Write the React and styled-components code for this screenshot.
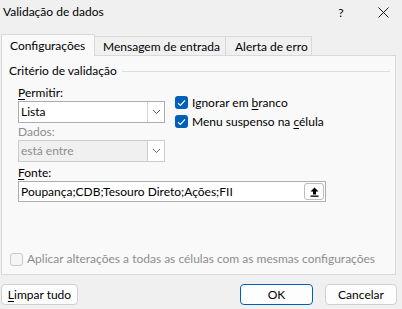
import React from "react";
import styled, {createGlobalStyle} from "styled-components";

const GlobalStyle = createGlobalStyle`
  html, body {
    margin: 0;
    padding: 0;
    background: #f0f0f0;
  }
  body {
    font-family: Lato, "Noto Sans", sans-serif;
    font-size: 12px;
    color: #000;
  }
`

const Window = styled.div`
  width: 402px;
  height: 309px;
  background: #f0f0f0;
  overflow: hidden;
  box-sizing: border-box;
`

const TitleBar = styled.div`
  display: flex;
  align-items: center;
  height: 24px;
`

const Title = styled.div`
  flex: 1;
  padding-left: 3px;
  line-height: 16px;
`

const TitleButton = styled.div`
  width: ${p => p.$w}px;
  height: 24px;
  display: flex;
  align-items: center;
  justify-content: center;
`

const TabStrip = styled.div`
  display: flex;
  align-items: flex-end;
  height: 21px;
  margin-top: 10px;
  padding-left: 1px;
`

const Tab = styled.div`
  position: relative;
  box-sizing: border-box;
  flex: 0 0 auto;
  width: ${p => p.$w}px;
  height: ${p => p.$active ? 22 : 19}px;
  margin-bottom: ${p => p.$active ? -1 : 0}px;
  padding-left: ${p => p.$pl}px;
  display: flex;
  align-items: center;
  white-space: nowrap;
  background: ${p => p.$active ? "#f9f9f9" : "#f0f0f0"};
  border: 1px solid #d9d9d9;
  border-bottom: none;
  ${p => p.$active ? "z-index: 1;" : "margin-left: -1px;"}
`

const Panel = styled.div`
  box-sizing: border-box;
  width: 395px;
  height: 220px;
  margin-left: 1px;
  background: #f9f9f9;
  border: 1px solid #d9d9d9;
  padding: 7px 5px 7px 7px;
  display: flex;
  flex-direction: column;
`

const GroupHeader = styled.div`
  display: flex;
  align-items: center;
  gap: 5px;
  line-height: 16px;
`

const GroupLine = styled.div`
  flex: 1;
  height: 1px;
  background: #dcdcdc;
`

const GroupBody = styled.div`
  padding-left: 9px;
  display: flex;
  flex-direction: column;
`

const Row = styled.div`
  display: flex;
  align-items: flex-start;
  gap: 10px;
`

const FieldColumn = styled.div`
  width: 147px;
  display: flex;
  flex-direction: column;
`

const Label = styled.div`
  line-height: 16px;
  margin-top: ${p => p.$mt || 0}px;
  color: ${p => p.$disabled ? "#8d8d8d" : "#000"};
`

const Key = styled.span`
  text-decoration: underline;
  text-underline-offset: 2px;
`

const Select = styled.div`
  box-sizing: border-box;
  height: 22px;
  display: flex;
  border: 1px solid ${p => p.$disabled ? "#cccccc" : "#adadad"};
  background: ${p => p.$disabled ? "#f0f0f0" : "#fff"};
  color: ${p => p.$disabled ? "#8d8d8d" : "#000"};
`

const SelectValue = styled.div`
  flex: 1;
  padding-left: 2px;
  line-height: 20px;
`

const DropButton = styled.div`
  width: 16px;
  border-left: 1px solid ${p => p.$disabled ? "#cccccc" : "#d4d4d4"};
  background: #fff;
  display: flex;
  align-items: center;
  justify-content: center;
`

const CheckColumn = styled.div`
  margin-top: 16px;
  display: flex;
  flex-direction: column;
`

const CheckRow = styled.div`
  display: flex;
  align-items: ${p => p.$center ? "center" : "flex-start"};
  gap: 4px;
  height: ${p => p.$center ? 16 : 19}px;
  line-height: 16px;
  white-space: nowrap;
  color: ${p => p.$disabled ? "#8d8d8d" : "#000"};
`

const Box = styled.div`
  box-sizing: border-box;
  width: 13px;
  height: 13px;
  margin-top: ${p => p.$center ? 0 : 1}px;
  border-radius: 3px;
  flex-shrink: 0;
  display: flex;
  align-items: center;
  justify-content: center;
  background: ${p => p.$checked ? "#005fb8" : "#f5f5f5"};
  border: ${p => p.$checked ? "none" : "1px solid #c8c8c8"};
`

const SourceInput = styled.div`
  box-sizing: border-box;
  width: 308px;
  height: 21px;
  display: flex;
  align-items: center;
  border: 1px solid #adadad;
  background: #fff;
  padding: 0 1px 0 2px;
`

const SourceText = styled.div`
  flex: 1;
  line-height: 16px;
  white-space: nowrap;
`

const PickButton = styled.div`
  box-sizing: border-box;
  width: 20px;
  height: 17px;
  border: 1px solid #bdbdbd;
  border-radius: 3px;
  background: #fdfdfd;
  display: flex;
  align-items: center;
  justify-content: center;
`

const BottomCheck = styled.div`
  margin-top: auto;
  padding-left: 1px;
`

const Footer = styled.div`
  display: flex;
  justify-content: space-between;
  margin-top: 9px;
  padding: 0 5px 0 1px;
`

const ButtonGroup = styled.div`
  display: flex;
  gap: 12px;
`

const Button = styled.div`
  box-sizing: border-box;
  width: ${p => p.$w}px;
  height: 21px;
  display: flex;
  align-items: center;
  justify-content: center;
  background: #fdfdfd;
  border: 1px solid ${p => p.$primary ? "#005fb8" : "#d0d0d0"};
  border-radius: 4px;
  line-height: 16px;
`

const Chevron = ({color}) => (
    <svg width="9" height="6" viewBox="0 0 9 6">
        <path d="M1 1 L4.5 4.5 L8 1" fill="none" stroke={color} strokeWidth="1"/>
    </svg>
)

const Check = () => (
    <svg width="9" height="8" viewBox="0 0 9 8">
        <path d="M1 4.2 L3.4 6.4 L8 1.4" fill="none" stroke="#fff" strokeWidth="1.2"/>
    </svg>
)

const App = () => {
    return (
        <Window>
            <GlobalStyle/>
            <TitleBar>
                <Title>Validação de dados</Title>
                <TitleButton $w={46}>?</TitleButton>
                <TitleButton $w={38}>
                    <svg width="11" height="11" viewBox="0 0 11 11">
                        <path d="M0.5 0.5 L10.5 10.5 M10.5 0.5 L0.5 10.5" stroke="#1a1a1a" strokeWidth="1"/>
                    </svg>
                </TitleButton>
            </TitleBar>
            <TabStrip>
                <Tab $active $w={94} $pl={8}>Configurações</Tab>
                <Tab $w={132} $pl={8}>Mensagem de entrada</Tab>
                <Tab $w={87} $pl={9}>Alerta de erro</Tab>
            </TabStrip>
            <Panel>
                <GroupHeader>
                    <span>Critério de validação</span>
                    <GroupLine/>
                </GroupHeader>
                <GroupBody>
                    <Row>
                        <FieldColumn>
                            <Label $mt={6}><Key>P</Key>ermitir:</Label>
                            <Select>
                                <SelectValue>Lista</SelectValue>
                                <DropButton><Chevron color="#5a5a5a"/></DropButton>
                            </Select>
                            <Label $mt={1} $disabled>Dados:</Label>
                            <Select $disabled>
                                <SelectValue>está entre</SelectValue>
                                <DropButton $disabled><Chevron color="#6a6a6a"/></DropButton>
                            </Select>
                        </FieldColumn>
                        <CheckColumn>
                            <CheckRow>
                                <Box $checked><Check/></Box>
                                <span>Ignorar em <Key>b</Key>ranco</span>
                            </CheckRow>
                            <CheckRow>
                                <Box $checked><Check/></Box>
                                <span>Menu suspenso na <Key>c</Key>élula</span>
                            </CheckRow>
                        </CheckColumn>
                    </Row>
                    <Label $mt={3}><Key>F</Key>onte:</Label>
                    <SourceInput>
                        <SourceText>Poupança;CDB;Tesouro Direto;Ações;FII</SourceText>
                        <PickButton>
                            <svg width="9" height="10" viewBox="0 0 9 10">
                                <path d="M4.5 0.5 L8.5 4.5 L6 4.5 L6 7.5 L3 7.5 L3 4.5 L0.5 4.5 Z" fill="#000"/>
                                <rect x="0.5" y="8.5" width="8" height="1.3" fill="#000"/>
                            </svg>
                        </PickButton>
                    </SourceInput>
                </GroupBody>
                <BottomCheck>
                    <CheckRow $center $disabled>
                        <Box $center/>
                        <span>Aplicar alterações a todas as células com as mesmas configurações</span>
                    </CheckRow>
                </BottomCheck>
            </Panel>
            <Footer>
                <Button $w={77}><span><Key>L</Key>impar tudo</span></Button>
                <ButtonGroup>
                    <Button $w={73} $primary>OK</Button>
                    <Button $w={72}>Cancelar</Button>
                </ButtonGroup>
            </Footer>
        </Window>
    )
}

export default App;
